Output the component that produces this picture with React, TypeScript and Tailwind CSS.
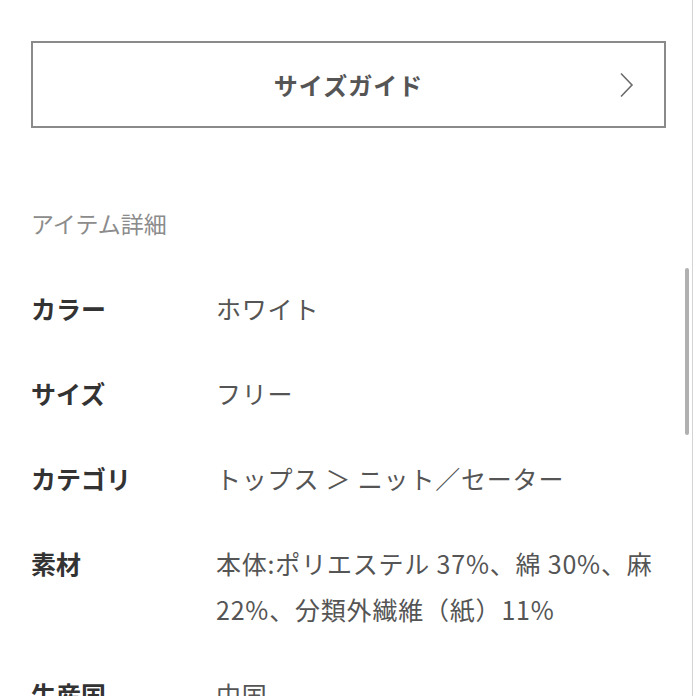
import React from 'react';

const rows: { label: string; value: string }[] = [
  { label: 'カラー', value: 'ホワイト' },
  { label: 'サイズ', value: 'フリー' },
  { label: 'カテゴリ', value: 'トップス ＞ ニット／セーター' },
  { label: '素材', value: '本体:ポリエステル 37%、綿 30%、麻\n22%、分類外繊維（紙）11%' },
  { label: '生産国', value: '中国' },
];

export default function App() {
  return (
    <div
      className="relative w-[696px] h-[696px] overflow-hidden bg-white"
      style={{ fontFamily: '"Noto Sans CJK JP", "Noto Sans", sans-serif' }}
    >
      <div className="pl-[31px] pr-[30px] pt-[41px]">
        <button className="relative flex h-[87px] w-full items-center justify-center border-2 border-[#8a8a8a] bg-white">
          <span className="text-[24px] font-semibold text-[#555] tracking-[1px]">サイズガイド</span>
          <svg
            className="absolute right-[30px] top-1/2 -translate-y-1/2"
            width="15"
            height="27"
            viewBox="0 0 15 27"
            fill="none"
          >
            <path d="M2 2 L13 13.5 L2 25" stroke="#6b6b6b" strokeWidth="1.6" />
          </svg>
        </button>

        <div className="mt-[72px] flex flex-col gap-[39px]">
          <div className="text-[23px] leading-[46px] text-[#8c8c8c]">アイテム詳細</div>
          {rows.map((r) => (
            <div key={r.label} className="flex">
              <div className="w-[185px] shrink-0 text-[25px] font-bold leading-[46px] text-[#333]">
                {r.label}
              </div>
              <div className="w-[460px] whitespace-pre-line text-[25px] leading-[46px] tracking-[0.8px] text-[#555]">
                {r.value}
              </div>
            </div>
          ))}
        </div>
      </div>

      <div className="absolute right-[3px] top-0 h-full w-px bg-[#d4d4d4]" />
      <div className="absolute left-[685px] top-[268px] h-[167px] w-[4px] rounded-full bg-[#b0b0b0]" />
    </div>
  );
}
